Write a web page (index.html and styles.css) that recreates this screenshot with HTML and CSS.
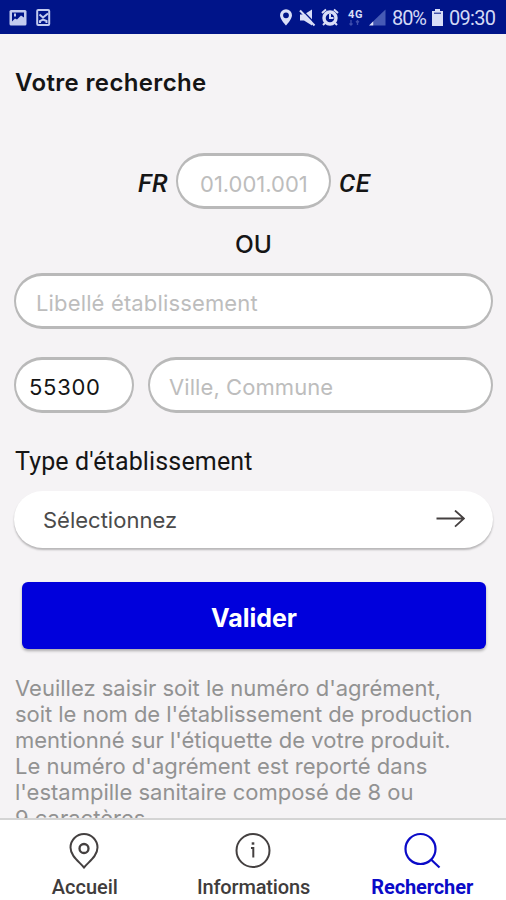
FILE: index.html
```html
<!DOCTYPE html>
<html lang="fr">
<head>
<meta charset="utf-8">
<title>Votre recherche</title>
<link rel="stylesheet" href="styles.css">
</head>
<body>
<header class="status">
  <svg class="status-left" width="60" height="34" viewBox="0 0 60 34">
    <rect x="9.500" y="10" width="17" height="15.500" rx="1.500" fill="#c3cbef"/>
    <path d="M12 12.500h12v5l-3-2-4 4-2-1-3 3z" fill="#001489"/>
    <path d="M14 13.500h2v3h-2z" fill="#c3cbef"/>
    <rect x="37.200" y="10" width="12" height="15" rx="1" fill="none" stroke="#c3cbef" stroke-width="2"/>
    <path d="M39.500 14.500l3.500 3 5-4M40 23v-2l3-1.500 3.500 1.500v2" fill="none" stroke="#c3cbef" stroke-width="2"/>
  </svg>
  <svg class="status-icons" width="110" height="34" viewBox="278 0 110 34">
    <path d="M286 9.200a6 6 0 0 0-6 6c0 4 6 10.300 6 10.300s6-6.300 6-10.300a6 6 0 0 0-6-6zm0 3.200a2.900 2.900 0 1 1 0 5.800 2.900 2.900 0 0 1 0-5.800z" fill="#d9def7" fill-rule="evenodd"/>
    <path d="M300 14.500h4l8-5v16l-8-5h-4z" fill="#d9def7"/>
    <path d="M302 10l13 13.500" stroke="#001489" stroke-width="1.500"/>
    <path d="M300 10.500l14.500 15" stroke="#d9def7" stroke-width="2"/>
    <circle cx="330" cy="18" r="6" fill="none" stroke="#d9def7" stroke-width="3.400"/>
    <path d="M322 13l4-3.500M338 13l-4-3.500M325 23l-2 2M335 23l2 2M330 14v4h3.500" fill="none" stroke="#d9def7" stroke-width="2"/>
    <text class="network" x="348" y="17.500" textLength="14.500">4G</text>
    <path d="M351 20v5m-1.500-1.500L351 25l1.500-1.500M357.500 25v-4m-1.500 1.200l1.500-1.500 1.500 1.500" stroke="#3f4fae" stroke-width="1.300" fill="none"/>
    <path d="M385.500 9.500v16H374v-5z" fill="#465ab5"/>
    <path d="M369 25.500h4.500V21z" fill="#d9def7"/>
  </svg>
  <span class="status-text battery-text">80%</span>
  <svg class="battery" width="13" height="34" viewBox="0 0 12 34">
    <path d="M3.500 9h5v2H11.500v15H.5V11h3z" fill="#d9def7"/><path d="M2.500 13.200h7" stroke="#001489" stroke-width="1"/>
  </svg>
  <span class="status-text clock">09:30</span>
</header>
<main class="content">
  <h1 class="title">Votre recherche</h1>
  <form class="form">
    <div class="approval">
      <span class="mark mark-fr">FR</span>
      <input class="field approval-field" placeholder="01.001.001">
      <span class="mark mark-ce">CE</span>
    </div>
    <div class="or">OU</div>
    <input class="field name-field" placeholder="Libellé établissement">
    <div class="place">
      <input class="field zip-field" value="55300">
      <input class="field city-field" placeholder="Ville, Commune">
    </div>
    <div class="type-label">Type d'établissement</div>
    <div class="select">
      <span class="select-text">Sélectionnez</span>
      <svg width="30" height="20" viewBox="0 0 30 20"><path d="M1.500 8.500H29M20 .5L29 8.500l-9 8.200" fill="none" stroke="#454040" stroke-width="1.800"/></svg>
    </div>
    <button class="submit" type="button">Valider</button>
  </form>
  <p class="help">
    <span class="line">Veuillez saisir soit le numéro d'agrément,</span>
    <span class="line line-tight">soit le nom de l'établissement de production</span>
    <span class="line">mentionné sur l'étiquette de votre produit.</span>
    <span class="line">Le numéro d'agrément est reporté dans</span>
    <span class="line">l'estampille sanitaire composé de 8 ou</span>
    <span class="line">9 caractères.</span>
  </p>
</main>
<nav class="nav">
  <a class="tab">
    <svg width="40" height="40" viewBox="0 0 40 40" fill="none" stroke="#444040" stroke-width="2"><path d="M20 36.500C15 30.500 6.500 25 6.500 16.500a13.500 13.500 0 0 1 27 0C33.500 25 25 30.500 20 36.500z"/><circle cx="20" cy="17.500" r="4.500" stroke-width="2.300"/></svg>
    <span class="tab-text">Accueil</span>
  </a>
  <a class="tab">
    <svg width="40" height="40" viewBox="0 0 40 40" fill="none" stroke="#444040" stroke-width="2"><circle cx="20" cy="19.500" r="16.500"/><path d="M18 17h2.300v9.500"/><path d="M18.700 12.500h2.600" stroke-width="2.400"/></svg>
    <span class="tab-text tab-text-tight">Informations</span>
  </a>
  <a class="tab active">
    <svg width="40" height="40" viewBox="0 0 40 40" fill="none" stroke="#0b0bc8" stroke-width="2.200"><circle cx="18.500" cy="18" r="15"/><path d="M29 28.500l8.500 8"/></svg>
    <span class="tab-text">Rechercher</span>
  </a>
</nav>
</body>
</html>
```

FILE: styles.css
```css
* { box-sizing: border-box; }
body {
  margin: 0;
  width: 506px;
  height: 900px;
  display: flex;
  flex-direction: column;
  overflow: hidden;
  background: #f5f3f5;
  color: #151515;
  font-family: Inter, "Liberation Sans", sans-serif;
}
svg { display: block; flex: none; }
.status {
  height: 34px;
  flex: none;
  display: flex;
  align-items: center;
  background: #001489;
}
.status-icons { margin-left: 218px; }
.network { font: 700 11px Roboto, sans-serif; fill: #d9def7; }
.status-text {
  font: 400 20px/34px Roboto, sans-serif;
  color: #d3d9f5;
  white-space: nowrap;
  padding-top: 1px;
}
.battery-text { width: 38px; margin-left: 4px; letter-spacing: -1.100px; }
.battery { margin-left: 1px; }
.clock { margin-left: 5px; letter-spacing: -0.700px; }
.content { flex: 1; min-height: 0; overflow: hidden; padding: 0 14px; }
.title {
  margin: 32px 0 0 1px;
  font-size: 24px;
  line-height: 34px;
  font-weight: 600;
  letter-spacing: 0.350px;
  white-space: nowrap;
}
.form { margin: 0; display: flex; flex-direction: column; }
.approval {
  margin: 53px 0 0 124px;
  height: 56px;
  display: flex;
  align-items: center;
}
.mark { font: italic 500 25.500px/56px Roboto, sans-serif; padding-top: 2px; }
.mark-fr { width: 38px; height: 56px; letter-spacing: 0.500px; }
.mark-ce { margin-left: 8px; height: 56px; letter-spacing: 0.500px; }
.field {
  height: 56px;
  min-width: 0;
  border: 2.500px solid #b9b9b9;
  border-width: 3px 2px;
  border-radius: 28px;
  background: #fff;
  padding: 3px 21px 0;
  outline: none;
  color: #151515;
  font: 400 22px Inter, sans-serif;
}
.field::placeholder { color: #bdbdbd; opacity: 1; }
.approval-field { width: 155px; padding: 5px 10px 0 22px; letter-spacing: 0; }
.or {
  margin-top: 18px;
  padding-left: 1px;
  text-align: center;
  font: 500 24.500px/34px Inter, sans-serif;
}
.name-field { margin-top: 12px; width: 479px; padding-left: 20px; letter-spacing: 0.150px; }
.place { display: flex; gap: 14px; margin-top: 28px; width: 479px; }
.zip-field { width: 120px; padding: 3px 0 0 13px; letter-spacing: 0.700px; }
.city-field { flex: 1; padding-left: 19px; letter-spacing: 0.080px; }
.type-label {
  margin: 32px 0 0 1px;
  font: 400 25px/34px Roboto, sans-serif;
  letter-spacing: 0.150px;
  white-space: nowrap;
}
.select {
  margin-top: 12px;
  width: 479px;
  height: 57px;
  padding: 0 28px 0 29px;
  border-radius: 29px;
  background: #fff;
  box-shadow: 0 2px 2px rgba(0, 0, 0, .25);
  display: flex;
  align-items: center;
  justify-content: space-between;
}
.select-text { font-size: 22px; color: #4b4b4b; padding-top: 1px; }
.submit {
  margin: 34px 0 0 8px;
  width: 464px;
  height: 67px;
  border: 0;
  border-radius: 6px;
  background: #0000dc;
  box-shadow: 0 2px 3px rgba(0, 0, 0, .3);
  color: #fff;
  font: 700 25px Inter, sans-serif;
  padding: 5px 0 0;
}
.help { margin: 26px 0 0 1px; color: #929292; }
.line {
  display: block;
  font-size: 22px;
  line-height: 26px;
  white-space: nowrap;
}
.line-tight { letter-spacing: -0.050px; }
.nav {
  height: 82px;
  flex: none;
  display: flex;
  border-top: 2px solid #d4d4d4;
  background: #fff;
}
.tab {
  width: 169px;
  display: flex;
  flex-direction: column;
  align-items: center;
  padding-top: 11px;
  color: #403c3c;
}
.tab-text { font: 500 20px/24px Roboto, sans-serif; margin: 4px 0 0 1px; }
.tab-text-tight { letter-spacing: -0.150px; }
.active { color: #0b0bc8; }
.active .tab-text { font-weight: 700; letter-spacing: -0.100px; }
```
